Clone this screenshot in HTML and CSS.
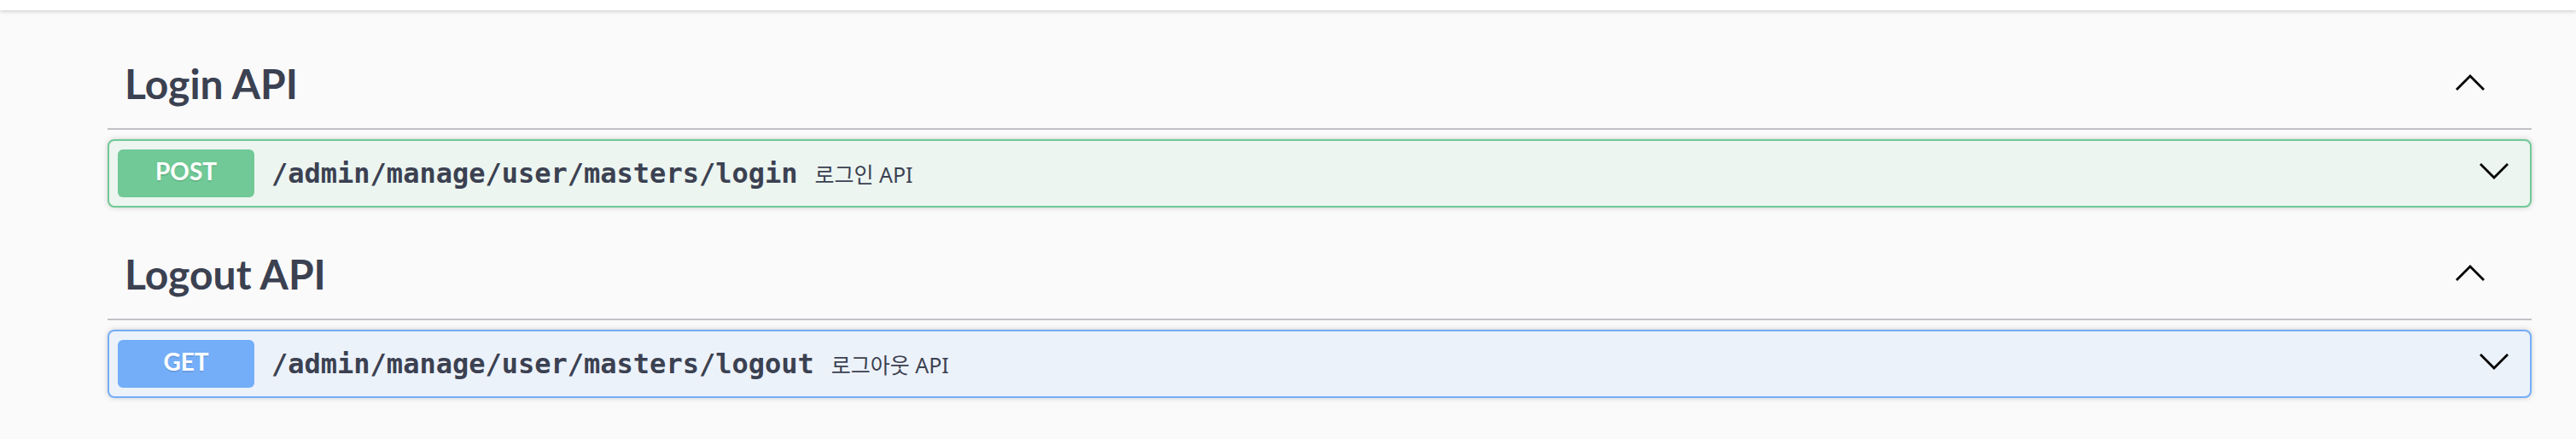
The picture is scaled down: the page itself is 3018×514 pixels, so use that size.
FILE: index.html
```html
<!DOCTYPE html>
<html lang="ko">
<head>
<meta charset="utf-8">
<title>Swagger UI</title>
<link rel="stylesheet" href="styles.css">
</head>
<body>
<div class="topbar"></div>
<main class="wrapper">
  <section class="tag-section">
    <h3 class="tag">
      <span class="tag-name">Login API</span>
      <svg class="arrow" width="34" height="18" viewBox="0 0 34 18"><polyline points="1,17 17,1 33,17"/></svg>
    </h3>
    <div class="opblock opblock-post">
      <span class="method">POST</span>
      <span class="path">/admin/manage/user/masters/login</span>
      <span class="desc">로그인 API</span>
      <svg class="arrow" width="34" height="18" viewBox="0 0 34 18"><polyline points="1,1 17,17 33,1"/></svg>
    </div>
  </section>
  <section class="tag-section">
    <h3 class="tag">
      <span class="tag-name">Logout API</span>
      <svg class="arrow" width="34" height="18" viewBox="0 0 34 18"><polyline points="1,17 17,1 33,17"/></svg>
    </h3>
    <div class="opblock opblock-get">
      <span class="method">GET</span>
      <span class="path">/admin/manage/user/masters/logout</span>
      <span class="desc">로그아웃 API</span>
      <svg class="arrow" width="34" height="18" viewBox="0 0 34 18"><polyline points="1,1 17,17 33,1"/></svg>
    </div>
  </section>
</main>
</body>
</html>
```

FILE: styles.css
```css
html, body {
  margin: 0;
  padding: 0;
  background: #fafafa;
}

body {
  font-family: "Noto Sans", "Noto Sans CJK KR", sans-serif;
  color: #3b4151;
}

.topbar {
  height: 12px;
  background: #ffffff;
  box-shadow: 0 2px 4px 0 rgba(0, 0, 0, 0.15);
}

.wrapper {
  padding: 32px 52px 0 126px;
}

.tag-section {
  margin-bottom: 24px;
}

.tag {
  display: flex;
  align-items: center;
  height: 106px;
  margin: 0 0 11px;
  padding: 0 0 0 20px;
  border-bottom: 2px solid rgba(59, 65, 81, 0.3);
  font-family: Lato, "Noto Sans CJK KR", sans-serif;
  font-size: 48px;
  font-weight: 700;
  color: #3b4151;
}

.tag-name {
  flex: 1 1 auto;
}

.tag .arrow {
  margin-right: 55px;
}

.arrow {
  flex: 0 0 auto;
  overflow: visible;
}

.arrow polyline {
  fill: none;
  stroke: #000000;
  stroke-width: 2.8;
  stroke-linejoin: miter;
}

.opblock {
  display: flex;
  align-items: center;
  height: 80px;
  box-sizing: border-box;
  padding: 0 25px 0 10px;
  border: 2px solid;
  border-radius: 8px;
  box-shadow: 0 0 6px rgba(0, 0, 0, 0.19);
}

.opblock-post {
  border-color: #70c996;
  background: #ecf5f0;
}

.opblock-get {
  border-color: #74aef8;
  background: #ecf2fa;
}

.method {
  flex: 0 0 auto;
  width: 160px;
  height: 56px;
  box-sizing: border-box;
  padding-bottom: 6px;
  line-height: 50px;
  text-align: center;
  border-radius: 6px;
  color: #ffffff;
  font-family: Lato, "Noto Sans", sans-serif;
  font-size: 28px;
  font-weight: 700;
  text-shadow: 0 2px 0 rgba(0, 0, 0, 0.1);
}

.opblock-post .method {
  background: #70c996;
}

.opblock-get .method {
  background: #74aef8;
}

.path {
  flex: 0 0 auto;
  padding: 0 20px;
  font-family: "DejaVu Sans Mono", monospace;
  font-size: 32px;
  font-weight: 700;
  color: #3b4151;
}

.desc {
  flex: 1 1 auto;
  font-family: "Noto Sans", "Noto Sans CJK KR", sans-serif;
  font-size: 25px;
  color: #3b4151;
}

.opblock .arrow {
  margin-bottom: 6px;
}
```
